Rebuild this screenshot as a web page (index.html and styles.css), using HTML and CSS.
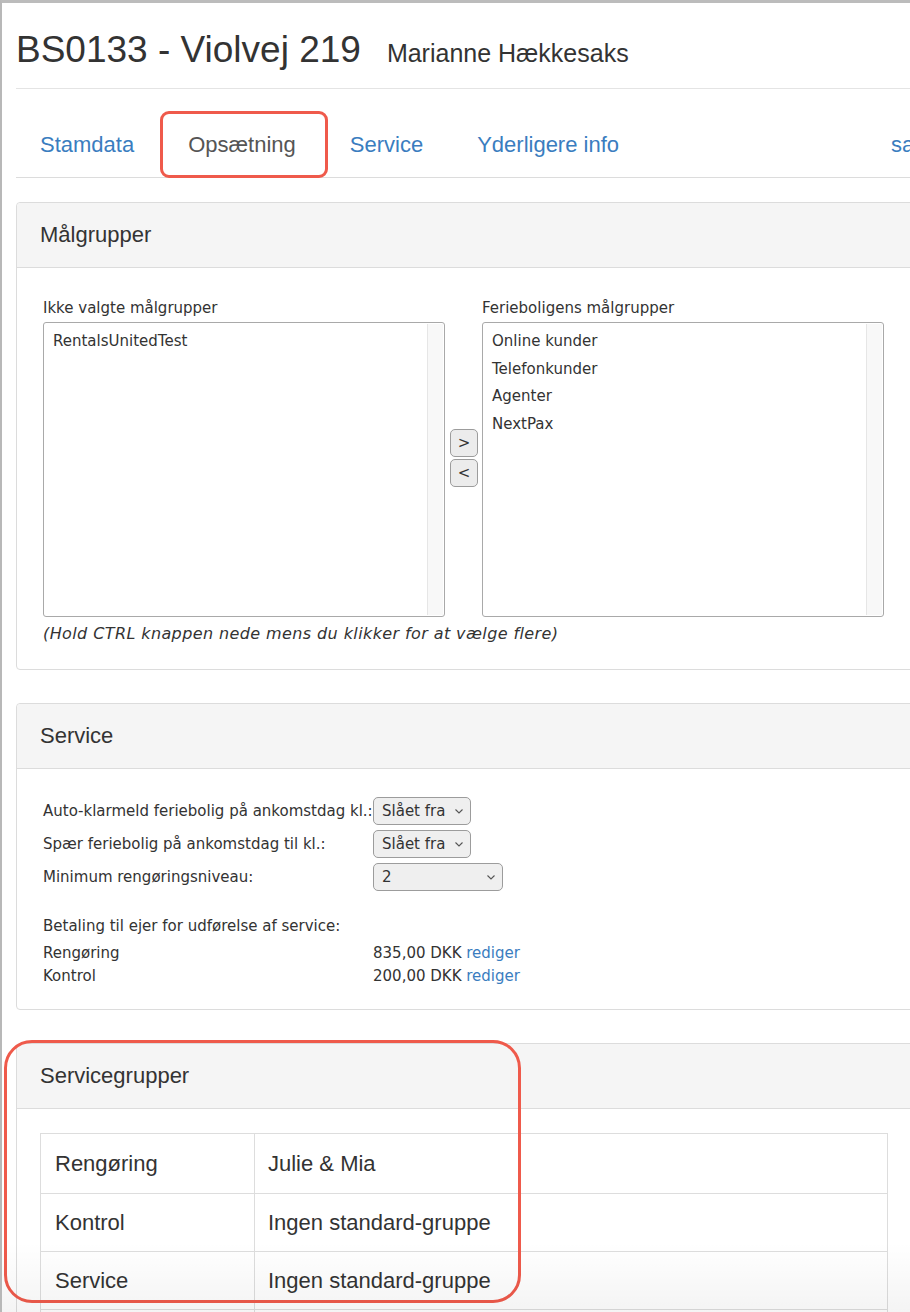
FILE: index.html
```html
<!DOCTYPE html>
<html lang="da">
<head>
<meta charset="utf-8">
<title>BS0133 - Violvej 219</title>
<link rel="stylesheet" href="styles.css">
</head>
<body>
<div class="frame">
  <div class="page">
    <header class="title-row">
      <h1 class="title">BS0133 - Violvej 219</h1>
      <span class="owner">Marianne Hækkesaks</span>
    </header>

    <nav class="tabs">
      <a class="tab" href="#">Stamdata</a>
      <span class="tab tab-active">Opsætning<span class="mark mark-tab"></span></span>
      <a class="tab" href="#">Service</a>
      <a class="tab" href="#">Yderligere info</a>
      <a class="tab tab-far" href="#">saldo</a>
    </nav>

    <section class="panel panel-first">
      <div class="panel-heading">Målgrupper</div>
      <div class="panel-body panel-body-lists">
        <div class="dual">
          <div class="dual-label">Ikke valgte målgrupper</div>
          <div></div>
          <div class="dual-label">Ferieboligens målgrupper</div>

          <div class="listbox">
            <div class="items">
              <div class="item">RentalsUnitedTest</div>
            </div>
            <div class="track"></div>
          </div>
          <div class="movers">
            <button class="mover" type="button">&gt;</button>
            <button class="mover" type="button">&lt;</button>
          </div>
          <div class="listbox">
            <div class="items">
              <div class="item">Online kunder</div>
              <div class="item">Telefonkunder</div>
              <div class="item">Agenter</div>
              <div class="item">NextPax</div>
            </div>
            <div class="track"></div>
          </div>
        </div>
        <p class="hint">(Hold CTRL knappen nede mens du klikker for at vælge flere)</p>
      </div>
    </section>

    <section class="panel">
      <div class="panel-heading">Service</div>
      <div class="panel-body panel-body-service">
        <div class="form-row">
          <span class="form-label">Auto-klarmeld feriebolig på ankomstdag kl.:</span>
          <span class="select select-short">Slået fra<svg class="chev" viewBox="0 0 8 5" width="8" height="5"><polyline points="0.5,0.5 4,4 7.5,0.5" fill="none" stroke="#555" stroke-width="1.1"/></svg></span>
        </div>
        <div class="form-row">
          <span class="form-label">Spær feriebolig på ankomstdag til kl.:</span>
          <span class="select select-short">Slået fra<svg class="chev" viewBox="0 0 8 5" width="8" height="5"><polyline points="0.5,0.5 4,4 7.5,0.5" fill="none" stroke="#555" stroke-width="1.1"/></svg></span>
        </div>
        <div class="form-row">
          <span class="form-label">Minimum rengøringsniveau:</span>
          <span class="select select-long">2<svg class="chev" viewBox="0 0 8 5" width="8" height="5"><polyline points="0.5,0.5 4,4 7.5,0.5" fill="none" stroke="#555" stroke-width="1.1"/></svg></span>
        </div>

        <div class="payments">
          <div class="pay-title">Betaling til ejer for udførelse af service:</div>
          <div class="pay-row"><span class="form-label">Rengøring</span><span>835,00 DKK <a class="link" href="#">rediger</a></span></div>
          <div class="pay-row"><span class="form-label">Kontrol</span><span>200,00 DKK <a class="link" href="#">rediger</a></span></div>
        </div>
      </div>
    </section>

    <section class="panel panel-groups">
      <div class="panel-heading">Servicegrupper</div>
      <div class="panel-body panel-body-groups">
        <table class="groups">
          <tr class="first-row"><td class="g-name">Rengøring</td><td>Julie &amp; Mia</td></tr>
          <tr><td class="g-name">Kontrol</td><td>Ingen standard-gruppe</td></tr>
          <tr><td class="g-name">Service</td><td>Ingen standard-gruppe</td></tr>
          <tr><td class="g-name">&nbsp;</td><td>&nbsp;</td></tr>
        </table>
      </div>
      <span class="mark mark-groups"></span>
    </section>
  </div>
  <div class="fade"></div>
</div>
</body>
</html>
```

FILE: styles.css
```css
html, body {
  margin: 0;
  padding: 0;
  background: #fff;
  overflow: hidden;
}

body {
  font-family: "Liberation Sans", Arial, sans-serif;
  color: #333;
}

.frame {
  position: relative;
  width: 980px;
  height: 1309px;
  border-top: 3px solid #bcbcbc;
  border-left: 2px solid #b8b8b8;
  overflow: hidden;
}

.page {
  padding-left: 14px;
  width: 940px;
}

/* title */
.title-row {
  display: flex;
  align-items: baseline;
  gap: 26px;
  padding: 23px 0 14px;
  border-bottom: 1px solid #e4e4e4;
}

.title {
  margin: 0;
  font-size: 37px;
  line-height: 48px;
  font-weight: normal;
  color: #333;
}

.owner {
  font-size: 25px;
  color: #333;
}

/* tabs */
.tabs {
  display: flex;
  gap: 54px;
  padding: 44px 0 20px 24px;
  border-bottom: 1px solid #dcdcdc;
  font-size: 22px;
  line-height: 24px;
}

.tab {
  color: #3a7dbf;
  text-decoration: none;
  white-space: nowrap;
}

.tab-active {
  position: relative;
  color: #555;
}

.tab-far {
  margin-left: 218px;
}

.mark {
  position: absolute;
  border: 3px solid #ef5a4b;
  box-sizing: border-box;
  pointer-events: none;
}

.mark-tab {
  left: -28px;
  top: -22px;
  width: 168px;
  height: 67px;
  border-radius: 9px;
}

/* panels */
.panel {
  border: 1px solid #dcdcdc;
  border-radius: 4px;
  margin-top: 33px;
  position: relative;
}

.panel-first {
  margin-top: 24px;
}

.panel-heading {
  background: #f5f5f5;
  height: 64px;
  line-height: 64px;
  padding-left: 23px;
  font-size: 22px;
  color: #333;
  border-bottom: 1px solid #dcdcdc;
  border-radius: 4px 4px 0 0;
}

.panel-body {
  padding: 29px 0 25px 26px;
  font-family: "DejaVu Sans", Verdana, sans-serif;
  font-size: 15px;
  line-height: 20px;
  color: #333;
}

.panel-body-lists {
  padding-top: 30px;
}

/* dual list */
.dual {
  display: grid;
  grid-template-columns: 402px 37px 402px;
  row-gap: 4px;
}

.dual-label {
  white-space: nowrap;
}

.listbox {
  height: 295px;
  box-sizing: border-box;
  border: 1px solid #a9a9a9;
  border-radius: 3px;
  display: flex;
  background: #fff;
}

.items {
  flex: 1;
  padding: 5px 9px;
}

.item {
  line-height: 27.7px;
  white-space: nowrap;
}

.track {
  width: 15px;
  margin: 1px 1px 1px 0;
  background: #f8f8f8;
  border-left: 1px solid #e6e6e6;
}

.movers {
  display: flex;
  flex-direction: column;
  gap: 2px;
  padding: 107px 0 0 5px;
}

.mover {
  width: 28px;
  height: 28px;
  padding: 0;
  border: 1px solid #9c9c9c;
  border-radius: 5px;
  background: #ececec;
  font-family: "DejaVu Sans", Verdana, sans-serif;
  font-size: 15px;
  color: #333;
}

.hint {
  margin: 7px 0 0;
  font-style: italic;
  font-size: 16px;
  letter-spacing: 0.4px;
  white-space: nowrap;
}

/* service form */
.panel-body-service {
  padding-top: 28px;
  padding-bottom: 21px;
}

.form-row {
  display: flex;
  align-items: center;
  height: 28px;
  margin-bottom: 5px;
}

.form-label {
  width: 330px;
  flex: none;
  white-space: nowrap;
}

.select {
  display: flex;
  align-items: center;
  justify-content: space-between;
  box-sizing: border-box;
  height: 28px;
  padding: 0 7px 0 8px;
  border: 1px solid #9c9c9c;
  border-radius: 5px;
  background: #efefef;
  white-space: nowrap;
}

.select-short { width: 98px; }
.select-long { width: 130px; }

.chev {
  margin-left: 6px;
}

.payments {
  margin-top: 24px;
  line-height: 23px;
}

.pay-title {
  margin-bottom: 4px;
}

.pay-row {
  display: flex;
  white-space: nowrap;
}

.link {
  color: #3a7dbf;
  text-decoration: none;
}

/* service groups */
.panel-body-groups {
  padding: 24px 0 0 23px;
}

.groups {
  border-collapse: collapse;
  width: 848px;
  font-family: "Liberation Sans", Arial, sans-serif;
  font-size: 22px;
  color: #333;
}

.groups td {
  border: 1px solid #dddddd;
  height: 57px;
  padding: 0 13px;
  white-space: nowrap;
}

.groups .first-row td {
  height: 59px;
}

.groups .g-name {
  width: 186px;
  padding-left: 14px;
}

.mark-groups {
  left: -13px;
  top: -4px;
  width: 517px;
  height: 263px;
  border-radius: 28px;
}

.fade {
  position: absolute;
  left: 0;
  right: 0;
  bottom: 0;
  height: 70px;
  background: linear-gradient(to bottom, rgba(0,0,0,0), rgba(0,0,0,0.045));
  pointer-events: none;
}
```
